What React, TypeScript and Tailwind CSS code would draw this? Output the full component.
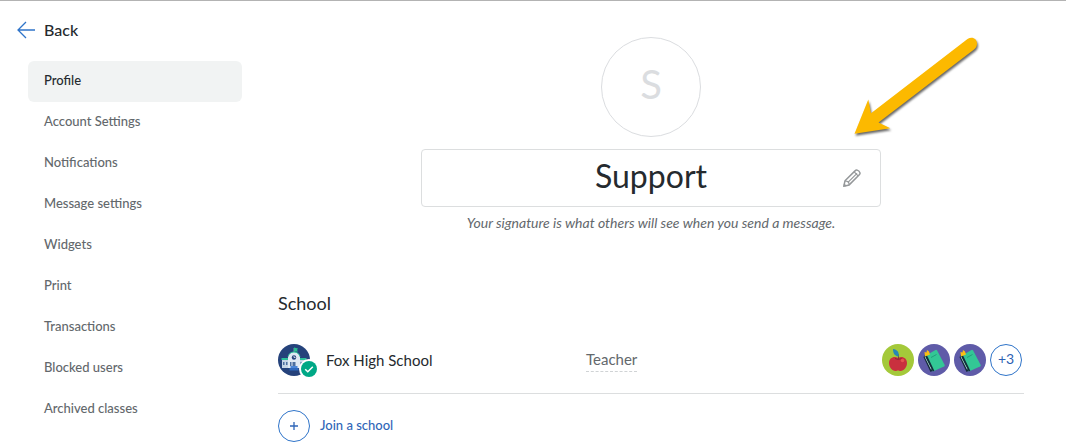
import { useState } from "react";

const navItems = [
  "Profile",
  "Account Settings",
  "Notifications",
  "Message settings",
  "Widgets",
  "Print",
  "Transactions",
  "Blocked users",
  "Archived classes",
];

function BackArrow() {
  return (
    <svg width="18" height="18" viewBox="0 0 18 18" fill="none" aria-hidden="true">
      <path d="M18 9H1M9 1L1 9l8 8" stroke="#2f74c9" strokeWidth="1.3" />
    </svg>
  );
}

function Pencil() {
  return (
    <svg width="18" height="18" viewBox="0 0 18 18" fill="none" aria-hidden="true">
      <path
        d="M0.8 17.2l1.2-5.4L12 1.9q1-1.2 2.2-.8q2.200.7 2.800 2.800q.2 1-.7 1.900L6.200 15.900l-5.400 1.300z"
        stroke="#95989a"
        strokeWidth="1.5"
        strokeLinejoin="round"
      />
      <path
        d="M2 11.800l2.600.7 1.200 1.300.4 2.100M5.200 13.100l8.800-8.700M11.200 2.900l3.900 3.900M1 15l2 2"
        stroke="#95989a"
        strokeWidth="1.2"
      />
    </svg>
  );
}

function PointerArrow() {
  return (
    <svg
      className="pointer-events-none absolute -top-[119px] -right-[109px] drop-shadow-[1px_2px_1px_rgba(0,0,0,0.6)]"
      width="140"
      height="120"
      viewBox="0 0 140 120"
      aria-hidden="true"
    >
      <path
        d="M4.500 103.800L18.300 69.500L21 83.300L117.500 9C122 6 127 8.500 127 13.500C127 16 126 18 124 19.500L28.500 92.500L40.300 98.300Z"
        fill="#fcb900"
      />
    </svg>
  );
}

function SchoolIcon() {
  return (
    <svg width="40" height="34" viewBox="0 0 40 34" aria-hidden="true">
      <circle cx="16" cy="16" r="16" fill="#25427b" />
      <path d="M16 4v6" stroke="#8fa6c4" strokeWidth="0.8" />
      <path d="M16 3.500l4 1-1 1.500 1 1.500h-4z" fill="#2bbf8f" />
      <path d="M4 15h24v9H4z" fill="#c6d5e6" />
      <path d="M3.500 14h7v2h-7zM21.500 14h7v2h-7z" fill="#2bbf9a" />
      <path d="M10 13q1.500-5 6-5t6 5v11H10z" fill="#dfe9f3" />
      <path d="M10 12.500q1.500-4.500 6-4.500t6 4.500" fill="none" stroke="#2bbf9a" strokeWidth="1" />
      <circle cx="16" cy="13.500" r="2.200" fill="#25427b" />
      <path d="M16 12v1.500h1.500" fill="none" stroke="#fff" strokeWidth="0.7" />
      <path d="M5 18h1.500v3H5zM8 18h1.500v3H8zM22.500 18H24v3h-1.500zM12 18h1.500v4H12zM14.500 18h3v5h-3z" fill="#4c6f9f" />
      <path d="M12.500 22h7v2h-7z" fill="#4a86d8" />
      <path d="M11.500 24h9v2.500h-9z" fill="#2f69bd" />
      <circle cx="31" cy="25" r="10" fill="#fff" />
      <circle cx="31" cy="25" r="8" fill="#00a886" />
      <path d="M27.200 25.200l2.600 2.600 5-5" fill="none" stroke="#fff" strokeWidth="1.500" />
    </svg>
  );
}

function AppleIcon() {
  return (
    <svg width="32" height="32" viewBox="0 0 32 32" aria-hidden="true">
      <circle cx="16" cy="16" r="16" fill="#a4c93a" />
      <path
        d="M16 14C12 11.500 7 14 7 19c0 4 3 8 6.500 8 1 0 1.500-.5 2.500-.5s1.500.5 2.500.5c3.500 0 6.500-4 6.500-8 0-5-5-7.500-9-5z"
        fill="#c9303e"
      />
      <path d="M13 14.500q3 2 6.500 0" fill="none" stroke="#8e2536" strokeWidth="1" />
      <path d="M16.300 15q.5-3-.3-5" fill="none" stroke="#7b3b2b" strokeWidth="1" />
      <path d="M16.500 12.500C12 12 11 8.500 11 5c4 .5 6.500 3 5.500 7.500z" fill="#2787b5" />
      <circle cx="20.500" cy="16.500" r="1.800" fill="#e5534f" />
    </svg>
  );
}

function BookIcon() {
  return (
    <svg width="32" height="32" viewBox="0 0 32 32" aria-hidden="true">
      <circle cx="16" cy="16" r="16" fill="#5f5ba8" />
      <path d="M5.500 13l2-2.500L16 26l-3.500 2z" fill="#142b3a" />
      <path d="M6.500 12.500l6.500 13 1.500-1-6-12z" fill="#d5f2ea" strokeDasharray="2 2" />
      <path d="M7 12L17.500 6q1-.5 1.600.5L26.700 21q.4 1-.7 1.500L14.800 27.500z" fill="#33c795" />
      <path d="M7 12l1.800-1L16.300 26.800l-1.500.7z" fill="#142b3a" />
      <path d="M13 13.500l5.500-3" stroke="#229f7b" strokeWidth="1" />
      <path d="M6.500 8l2 .5.500-2.500 2 1.500 1 3-5 2z" fill="#fdc012" />
    </svg>
  );
}

export default function App() {
  const [active, setActive] = useState("Profile");
  const [signature, setSignature] = useState("Support");

  return (
    <div className="border-t border-[#b3b3b3] bg-white font-[Lato,sans-serif] text-[#252a2e]">
      <div className="flex">
        {/* Sidebar */}
        <aside className="w-[242px] shrink-0 pt-[17px]">
          <a href="#" className="ml-[17px] flex h-6 w-fit items-center gap-[9px] text-base font-medium">
            <BackArrow />
            Back
          </a>
          <nav className="mt-[19px] ml-7">
            {navItems.map((item) => (
              <button
                key={item}
                type="button"
                onClick={() => setActive(item)}
                className={`block h-[41px] w-full rounded-md px-4 pb-0.5 text-left text-[13px] font-medium ${
                  item === active ? "bg-[#f1f3f3]" : "text-[#63686c]"
                }`}
              >
                {item}
              </button>
            ))}
          </nav>
        </aside>

        <main className="mr-[42px] ml-9 min-w-0 flex-1 pt-9">
          {/* Signature */}
          <section className="flex flex-col items-center">
            <div className="flex size-[100px] items-center justify-center rounded-full border border-[#dbdde0] pb-1.5 text-[40px] text-[#dbdde0]">
              S
            </div>
            <div className="relative mt-3 w-full max-w-[460px]">
              <input
                aria-label="Signature"
                aria-describedby="signature-hint"
                value={signature}
                onChange={(e) => setSignature(e.target.value)}
                className="block h-[58px] w-full rounded border border-[#dcdedf] px-12 pb-1.5 text-center text-[32px]"
              />
              <button type="button" aria-label="Edit signature" className="absolute top-5 right-5">
                <Pencil />
              </button>
              <PointerArrow />
            </div>
            <p id="signature-hint" className="mt-1.5 text-sm leading-5 text-[#63686c] italic">
              Your signature is what others will see when you send a message.
            </p>
          </section>

          {/* School */}
          <section className="mt-[58px]">
            <h2 className="text-lg leading-6">School</h2>
            <div className="mt-[29px] flex items-start border-b border-[#dcdedf] pb-[17px]">
              <div className="flex h-8 w-[308px] shrink-0 items-center gap-2">
                <div className="h-8 w-10">
                  <SchoolIcon />
                </div>
                <span className="text-[15px]">Fox High School</span>
              </div>
              <div className="flex h-8 flex-1 items-center">
                <button type="button" className="border-b border-dashed border-[#d0d3d5] text-[15px] text-[#63686c]">
                  Teacher
                </button>
              </div>
              <div className="mr-0.5 flex gap-1">
                <AppleIcon />
                <BookIcon />
                <BookIcon />
                <button
                  type="button"
                  className="size-8 rounded-full border border-[#2f74c9] pb-0.5 text-sm text-[#2c5fb3]"
                >
                  +3
                </button>
              </div>
            </div>
            <button type="button" className="mt-4 flex items-center gap-2.5 text-[13px] font-medium text-[#2f66b8]">
              <span className="flex size-8 items-center justify-center rounded-full border border-[#2f74c9]">
                <svg width="8" height="8" viewBox="0 0 8 8" aria-hidden="true">
                  <path d="M4 0v8M0 4h8" stroke="#2f66b8" strokeWidth="1.300" />
                </svg>
              </span>
              Join a school
            </button>
          </section>
        </main>
      </div>
    </div>
  );
}
